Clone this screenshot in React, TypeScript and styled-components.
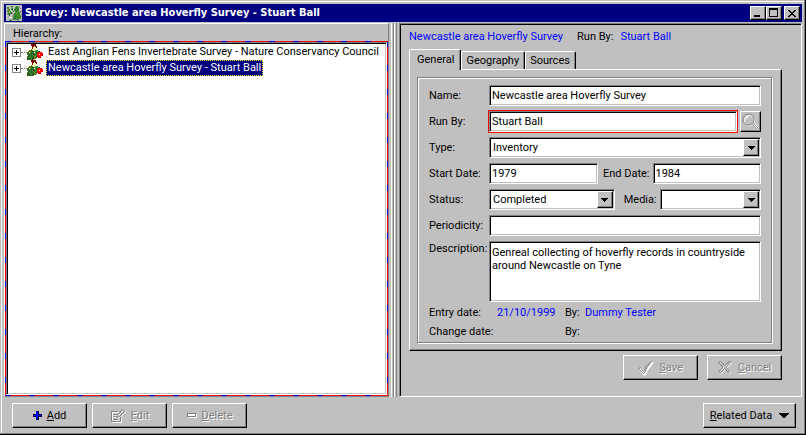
import React from "react";
import styled, { createGlobalStyle, css } from "styled-components";

const face = "#c0c0c0";
const shade = "#808080";
const navy = "#000080";
const link = "#0000ff";

const GlobalStyle = createGlobalStyle`
  *, *::before, *::after { box-sizing: border-box; }
  body {
    margin: 0;
    background: ${face};
    color: #000;
    font: 11px/13px Roboto, "Liberation Sans", sans-serif;
  }
  button, input, select, textarea { font: inherit; color: inherit; border-radius: 0; margin: 0; }
`;

const raised = css`
  border: 1px solid;
  border-color: #fff #000 #000 #fff;
  box-shadow: inset -1px -1px ${shade};
  background: ${face};
`;

const sunken = css`
  border: 1px solid;
  border-color: ${shade} #fff #fff ${shade};
  box-shadow: inset 1px 1px #000, inset -1px -1px ${face};
  background: #fff;
`;

/* ---------- window ---------- */

const Window = styled.div`
  display: flex;
  flex-direction: column;
  min-height: 100vh;
  padding: 4px 4px 2px;
  background: ${face};
  box-shadow: inset -1px -1px #000, inset -2px -2px ${shade}, inset 1px 1px ${face},
    inset 2px 2px #fff;
`;

const TitleBar = styled.header`
  display: flex;
  align-items: center;
  height: 18px;
  padding: 0 2px;
  margin-bottom: 1px;
  background: ${navy};
  color: #fff;
`;

const Title = styled.h1`
  flex: 1;
  margin: 0 0 0 3px;
  font: bold 11px/16px "DejaVu Sans Condensed", "DejaVu Sans", sans-serif;
  white-space: nowrap;
  overflow: hidden;
`;

const CaptionButton = styled.button<{ $apart?: boolean }>`
  ${raised}
  display: grid;
  place-items: center;
  width: 16px;
  height: 14px;
  padding: 0;
  margin-left: ${(p) => (p.$apart ? "2px" : "0")};
  color: #000;
`;

const Panes = styled.main`
  display: flex;
  flex: 1;
`;

/* ---------- hierarchy ---------- */

const TreePane = styled.section`
  display: flex;
  flex-direction: column;
  flex: 0 1 385px;
  min-width: 0;
  border: 1px solid;
  border-color: #fff ${shade} ${shade} #fff;
`;

const TreeTitle = styled.h2`
  margin: 0;
  padding: 3px 8px 1px;
  font: inherit;
`;

const dash = (dir: string) => `repeating-linear-gradient(${dir}, ${link} 0 6px, #f00 6px 24px)`;

const TreeFrame = styled.div`
  display: flex;
  flex: 1;
  padding: 1px;
  background: ${dash("to right")} 0 0 / 100% 1px no-repeat,
    ${dash("to right")} 0 100% / 100% 1px no-repeat,
    ${dash("to bottom")} 0 0 / 1px 100% no-repeat,
    ${dash("to bottom")} 100% 0 / 1px 100% no-repeat;
`;

const Tree = styled.ul`
  ${sunken}
  flex: 1;
  min-width: 0;
  margin: 0;
  padding: 1px;
  list-style: none;
`;

const TreeItem = styled.li`
  display: flex;
  align-items: center;
  height: 16px;
  padding-left: 4px;
`;

const Expander = styled.button`
  display: grid;
  place-items: center;
  width: 9px;
  height: 9px;
  padding: 0;
  border: 1px solid ${shade};
  background: #fff;
`;

const Connector = styled.span`
  width: 6px;
  border-top: 1px dotted ${shade};
`;

const TreeLabel = styled.button<{ $selected?: boolean }>`
  height: 16px;
  margin-left: 3px;
  padding: 0 1px;
  line-height: 14px;
  white-space: nowrap;
  text-align: left;
  border: 1px ${(p) => (p.$selected ? "dotted #ffff00" : "solid transparent")};
  background: ${(p) => (p.$selected ? navy : "transparent")};
  && { color: ${(p) => (p.$selected ? "#fff" : "#000")}; }
`;

const Splitter = styled.div`
  flex: none;
  width: 10px;
  padding: 0 2px;
  display: flex;
  &::before, &::after {
    content: "";
    width: 3px;
    border-left: 1px solid #fff;
    border-right: 1px solid ${shade};
  }
`;

/* ---------- details ---------- */

const DetailPane = styled.section`
  flex: 1;
  min-width: 0;
  padding: 4px 19px 8px 8px;
  border: 1px solid;
  border-color: ${shade} #fff #fff ${shade};
  box-shadow: inset 1px 1px #000;
`;

const Summary = styled.p`
  display: flex;
  margin: 0 0 6px 1px;
  padding-top: 2px;
  white-space: nowrap;
`;

const Blue = styled.span`
  color: ${link};
`;

const SummaryLabel = styled.span`
  margin: 0 7px 0 14px;
`;

const TabList = styled.div`
  display: flex;
  align-items: flex-end;
  margin-left: 1px;
`;

const Tab = styled.button<{ $active?: boolean }>`
  position: relative;
  height: ${(p) => (p.$active ? "21px" : "18px")};
  margin-bottom: ${(p) => (p.$active ? "-1px" : "0")};
  z-index: ${(p) => (p.$active ? 1 : 0)};
  padding: ${(p) => (p.$active ? "0 6px 1px 7px" : "0 5px 0 4px")};
  border: solid;
  border-width: 1px 1px 0 1px;
  border-color: #fff #000 #fff #fff;
  border-radius: 2px 2px 0 0;
  box-shadow: inset -1px 0 ${shade};
  background: ${face};
`;

const TabPage = styled.div`
  margin-left: 1px;
  padding: 7px 9px 7px 7px;
  ${raised}
`;

const Group = styled.div`
  display: flex;
  flex-direction: column;
  gap: 5px;
  padding: 7px 10px 1px 11px;
  border: 1px solid ${shade};
  box-shadow: 1px 1px #fff, inset 1px 1px #fff;
`;

const Row = styled.div<{ $top?: boolean }>`
  display: flex;
  align-items: ${(p) => (p.$top ? "flex-start" : "center")};
`;

const Label = styled.label`
  flex: 0 0 60px;
  white-space: nowrap;
`;

const TopLabel = styled(Label)`
  padding-top: 1px;
`;

const InnerLabel = styled.label<{ $width: number }>`
  flex: 0 0 ${(p) => p.$width}px;
  padding-right: 3px;
  text-align: right;
  white-space: nowrap;
`;

const TextField = styled.input`
  ${sunken}
  flex: 1 1 0;
  min-width: 0;
  height: 21px;
  padding: 0 2px;
  outline: 0;
`;

const RequiredFrame = styled.div`
  display: flex;
  flex: 1;
  min-width: 0;
  margin-left: -1px;
  margin-right: 2px;
  border: 1px solid #f00;
`;

const RequiredField = styled(TextField)`
  padding-bottom: 1px;
`;

const RunByRow = styled(Row)`
  height: 21px;
`;

const LookupButton = styled.button`
  ${raised}
  display: grid;
  place-items: center;
  width: 21px;
  height: 21px;
  padding: 0;
`;

const Picker = styled.div<{ $grow: number }>`
  ${sunken}
  display: grid;
  grid-template-columns: 1fr 16px;
  flex: ${(p) => p.$grow} 1 0;
  min-width: 0;
  height: 21px;
  padding: 1px;
`;

const PickerSelect = styled.select`
  grid-area: 1 / 1 / 2 / 3;
  appearance: none;
  min-width: 0;
  padding: 0 18px 0 2px;
  border: 0;
  outline: 0;
  background: transparent;
`;

const PickerArrow = styled.span`
  grid-area: 1 / 2 / 2 / 3;
  ${raised}
  display: grid;
  place-items: center;
  pointer-events: none;
`;

const Memo = styled.textarea`
  ${sunken}
  flex: 1;
  min-width: 0;
  height: 61px;
  padding: 4px 2px;
  resize: none;
  outline: 0;
`;

const Audit = styled.dl`
  display: grid;
  grid-template-columns: 68px 68px 20px 1fr;
  grid-auto-rows: 19px;
  align-items: center;
  margin: -4px 0 0;
  white-space: nowrap;
`;

const AuditValue = styled.dd`
  margin: 0;
  color: ${link};
`;

const Actions = styled.div`
  display: flex;
  justify-content: flex-end;
  gap: 9px;
  margin-top: 4px;
`;

/* ---------- buttons ---------- */

const PushButton = styled.button<{ $wide?: boolean }>`
  ${raised}
  display: flex;
  align-items: center;
  justify-content: center;
  gap: ${(p) => (p.$wide ? "7px" : "5px")};
  width: ${(p) => (p.$wide ? "93px" : "75px")};
  height: 25px;
  padding: 0;
  white-space: nowrap;
  &:disabled {
    color: ${shade};
    text-shadow: 1px 1px #fff;
  }
`;

const Footer = styled.footer`
  display: flex;
  gap: 5px;
  padding: 6px 6px 5px 8px;
`;

const Spacer = styled.span`
  flex: 1;
`;

/* ---------- drawings ---------- */

const palette: Record<string, string> = {
  k: "#000000",
  b: "#800000",
  r: "#ff0000",
  g: "#2e8b2e",
  d: "#24502c",
  o: "#808000",
  y: "#ffff80",
  w: "#ffffff",
  s: "#808080",
  l: "#c0c0c0",
  t: "#5c9c8c",
};

const hoverfly = [
  "....bbbbb.......",
  "....bbbbb.......",
  ".....bbybb......",
  ".....bywyb......",
  ".....bwywy......",
  "....o.ywyww.....",
  "..oodgyyggg.....",
  ".odgoddgggggd...",
  "odwgdgdwggdrrrr.",
  "dgodgddgodrrrrrr",
  "gdogdgddggrrwrrr",
  ".ddgdgodggrrrrrr",
  "odggdgdoodrrrrw.",
  "dgdogddood.rrr..",
  "ddgdgddgd.......",
  "bgddgdo.........",
];

const britain = [
  "llllllllllllllll",
  "lllllgglllgglsll",
  "lggllolllgggglll",
  "lgolltgllggdglsl",
  "llgolgdlgdogglll",
  "lsgglltlgggdglll",
  "lgolgllglggoglss",
  "llglgolllgggggsl",
  "logggdslogogggll",
  "llgdlllsggggogls",
  "llldlllsgggogggl",
  "lllllllggdgggogs",
  "llswwllgggogdggl",
  "lllllllgdggggogl",
  "llllslogsggggllp",
  "lllggslllllsslll",
];

function Pixels({ rows }: { rows: string[] }) {
  return (
    <svg width="16" height="16" viewBox="0 0 16 16" shapeRendering="crispEdges" aria-hidden="true">
      {rows.flatMap((row, y) =>
        [...row].map((c, x) =>
          c === "." ? null : (
            <rect key={`${x}-${y}`} x={x} y={y} width="1" height="1" fill={palette[c] ?? face} />
          ),
        ),
      )}
    </svg>
  );
}

const MinimizeGlyph = () => (
  <svg width="10" height="10" shapeRendering="crispEdges" aria-hidden="true">
    <path d="M1 7h6v2H1z" />
  </svg>
);

const MaximizeGlyph = () => (
  <svg width="10" height="10" shapeRendering="crispEdges" aria-hidden="true">
    <path fillRule="evenodd" d="M0 0h9v9H0zM1 2v6h7V2z" />
  </svg>
);

const CloseGlyph = () => (
  <svg width="8" height="7" shapeRendering="crispEdges" aria-hidden="true">
    <path d="M0 0h2v1H0zM6 0h2v1H6zM1 1h2v1H1zM5 1h2v1H5zM2 2h4v1H2zM3 3h2v1H3zM2 4h4v1H2zM1 5h2v1H1zM5 5h2v1H5zM0 6h2v1H0zM6 6h2v1H6z" />
  </svg>
);

const PlusGlyph = () => (
  <svg width="7" height="7" shapeRendering="crispEdges" aria-hidden="true">
    <path d="M1 3h5v1H1zM3 1h1v5H3z" />
  </svg>
);

const DownGlyph = () => (
  <svg width="7" height="4" shapeRendering="crispEdges" aria-hidden="true">
    <path d="M0 0h7v1H0zM1 1h5v1H1zM2 2h3v1H2zM3 3h1v1H3z" />
  </svg>
);

const MenuGlyph = () => (
  <svg width="10" height="5" shapeRendering="crispEdges" aria-hidden="true">
    <path d="M0 0h10v1H0zM1 1h8v1H1zM2 2h6v1H2zM3 3h4v1H3zM4 4h2v1H4z" />
  </svg>
);

const AddGlyph = () => (
  <svg width="9" height="9" shapeRendering="crispEdges" aria-hidden="true">
    <path d="M3 0h3v3h3v3H6v3H3V6H0V3h3z" fill="#000040" />
    <path d="M4 1h1v3h3v1H5v3H4V5H1V4h3z" fill={link} />
    <path d="M3 1h2v3h3v1H5v3H3V5H1V4h2z" fill={link} />
  </svg>
);

const DeleteGlyph = () => (
  <svg width="10" height="5" shapeRendering="crispEdges" aria-hidden="true">
    <path d="M1 1h9v4H1z" fill="#fff" />
    <path fillRule="evenodd" d="M0 0h9v4H0zM1 1v2h7V1z" fill={shade} />
  </svg>
);

const editLines = "M1.5 3.5H8M1.5 3.5v10h9V9M3.5 6.5h3M3.5 8.5h2M3.5 11.5h5M6.5 9.5l1-3 5-5 2 2-5 5zM10 4l2 2";

const EditGlyph = () => (
  <svg width="16" height="16" fill="none" aria-hidden="true">
    <path d={editLines} stroke="#fff" transform="translate(1 1)" />
    <path d={editLines} stroke={shade} />
  </svg>
);

const checkLines = "M.5 8.5l2-1 3 4q2-6 8.5-10.5q-5 5-8 12.5h-1z";

const SaveGlyph = () => (
  <svg width="16" height="16" fill="none" aria-hidden="true">
    <path d={checkLines} stroke="#fff" strokeWidth="2" transform="translate(1 1)" />
    <path d={checkLines} stroke={shade} />
  </svg>
);

const crossLines = "M.5 2.5l2-1 4 4 5-4 1 .5-4.5 5 4 4.5-1.5 1-4-4-4 4-1.5-1 4-4.5z";

const CancelGlyph = () => (
  <svg width="15" height="15" fill="none" aria-hidden="true">
    <path d={crossLines} stroke="#fff" transform="translate(1 1)" />
    <path d={crossLines} stroke={shade} />
  </svg>
);

const LensGlyph = () => (
  <svg width="17" height="17" fill="none" aria-hidden="true">
    <circle cx="7.5" cy="7.5" r="5" stroke="#fff" />
    <path d="M11.5 11.5l5 5M12.5 10.5l4 4" stroke="#fff" />
    <circle cx="6.5" cy="6.5" r="5.5" stroke={shade} />
    <path d="M10.5 11l5 5M11.5 10.5l5 5" stroke={shade} />
    <path d="M11.5 11.5l4 4" stroke="#fff" />
    <path d="M4 6.5Q4 4 6.5 4" stroke="#fff" />
  </svg>
);

/* ---------- page ---------- */

const surveys = [
  "East Anglian Fens Invertebrate Survey - Nature Conservancy Council",
  "Newcastle area Hoverfly Survey - Stuart Ball",
];

function DropDown({ id, options, grow = 1 }: { id: string; options: string[]; grow?: number }) {
  return (
    <Picker $grow={grow}>
      <PickerSelect id={id} defaultValue={options[0]}>
        {options.map((o) => (
          <option key={o}>{o}</option>
        ))}
      </PickerSelect>
      <PickerArrow>
        <DownGlyph />
      </PickerArrow>
    </Picker>
  );
}

export default function App() {
  const [selected, setSelected] = React.useState(1);
  const [tab, setTab] = React.useState("General");
  return (
    <>
      <GlobalStyle />
      <Window>
        <TitleBar>
          <Pixels rows={britain} />
          <Title>Survey: Newcastle area Hoverfly Survey - Stuart Ball</Title>
          <CaptionButton aria-label="Minimize">
            <MinimizeGlyph />
          </CaptionButton>
          <CaptionButton aria-label="Maximize">
            <MaximizeGlyph />
          </CaptionButton>
          <CaptionButton aria-label="Close" $apart>
            <CloseGlyph />
          </CaptionButton>
        </TitleBar>

        <Panes>
          <TreePane>
            <TreeTitle>Hierarchy:</TreeTitle>
            <TreeFrame>
              <Tree>
                {surveys.map((name, i) => (
                  <TreeItem key={name}>
                    <Expander aria-label={`Expand ${name}`}>
                      <PlusGlyph />
                    </Expander>
                    <Connector />
                    <Pixels rows={hoverfly} />
                    <TreeLabel $selected={i === selected} onClick={() => setSelected(i)}>
                      {name}
                    </TreeLabel>
                  </TreeItem>
                ))}
              </Tree>
            </TreeFrame>
          </TreePane>

          <Splitter />

          <DetailPane>
            <Summary>
              <Blue>Newcastle area Hoverfly Survey</Blue>
              <SummaryLabel>Run By:</SummaryLabel>
              <Blue>Stuart Ball</Blue>
            </Summary>
            <TabList role="tablist">
              {["General", "Geography", "Sources"].map((t) => (
                <Tab key={t} role="tab" aria-selected={t === tab} $active={t === tab} onClick={() => setTab(t)}>
                  {t}
                </Tab>
              ))}
            </TabList>
            <TabPage role="tabpanel">
              <Group>
                <Row>
                  <Label htmlFor="name">Name:</Label>
                  <TextField id="name" defaultValue="Newcastle area Hoverfly Survey" />
                </Row>
                <RunByRow>
                  <Label htmlFor="runby">Run By:</Label>
                  <RequiredFrame>
                    <RequiredField id="runby" defaultValue="Stuart Ball" />
                  </RequiredFrame>
                  <LookupButton aria-label="Find" disabled>
                    <LensGlyph />
                  </LookupButton>
                </RunByRow>
                <Row>
                  <Label htmlFor="type">Type:</Label>
                  <DropDown id="type" options={["Inventory"]} />
                </Row>
                <Row>
                  <Label htmlFor="start">Start Date:</Label>
                  <TextField id="start" defaultValue="1979" />
                  <InnerLabel htmlFor="end" $width={55}>
                    End Date:
                  </InnerLabel>
                  <TextField id="end" defaultValue="1984" />
                </Row>
                <Row>
                  <Label htmlFor="status">Status:</Label>
                  <DropDown id="status" options={["Completed"]} grow={5} />
                  <InnerLabel htmlFor="media" $width={45}>
                    Media:
                  </InnerLabel>
                  <DropDown id="media" options={[""]} grow={4} />
                </Row>
                <Row>
                  <Label htmlFor="period">Periodicity:</Label>
                  <TextField id="period" />
                </Row>
                <Row $top>
                  <TopLabel htmlFor="desc">Description:</TopLabel>
                  <Memo
                    id="desc"
                    defaultValue="Genreal collecting of hoverfly records in countryside around Newcastle on Tyne"
                  />
                </Row>
                <Audit>
                  <dt>Entry date:</dt>
                  <AuditValue>21/10/1999</AuditValue>
                  <dt>By:</dt>
                  <AuditValue>Dummy Tester</AuditValue>
                  <dt>Change date:</dt>
                  <AuditValue />
                  <dt>By:</dt>
                  <AuditValue />
                </Audit>
              </Group>
            </TabPage>
            <Actions>
              <PushButton disabled>
                <SaveGlyph />
                <span>
                  <u>S</u>ave
                </span>
              </PushButton>
              <PushButton disabled>
                <CancelGlyph />
                <span>
                  <u>C</u>ancel
                </span>
              </PushButton>
            </Actions>
          </DetailPane>
        </Panes>

        <Footer>
          <PushButton>
            <AddGlyph />
            <span>
              <u>A</u>dd
            </span>
          </PushButton>
          <PushButton disabled>
            <EditGlyph />
            <span>
              <u>E</u>dit
            </span>
          </PushButton>
          <PushButton disabled>
            <DeleteGlyph />
            <span>
              <u>D</u>elete
            </span>
          </PushButton>
          <Spacer />
          <PushButton $wide>
            <span>
              <u>R</u>elated Data
            </span>
            <MenuGlyph />
          </PushButton>
        </Footer>
      </Window>
    </>
  );
}
